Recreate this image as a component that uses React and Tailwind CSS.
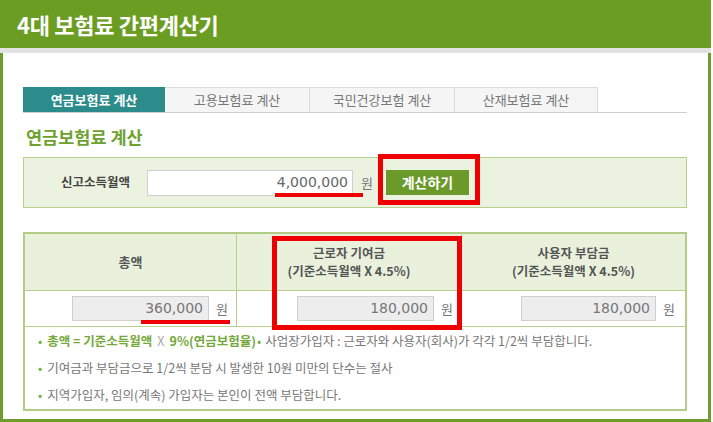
import React from "react";

const kr = { fontFamily: '"Noto Sans CJK KR", "Noto Sans", sans-serif' };
const num = { fontFamily: '"DejaVu Sans", "Liberation Sans", sans-serif' };

const tabs = [
  { label: "연금보험료 계산", w: "w-[142px]", active: true },
  { label: "고용보험료 계산", w: "w-[145px]" },
  { label: "국민건강보험 계산", w: "w-[145px]" },
  { label: "산재보험료 계산", w: "w-[143px]" },
];

const AmountField = ({ value, inputW }) => (
  <div className="flex items-center justify-end gap-[7px] pr-[8px]">
    <div
      className={`${inputW} h-[25px] bg-[#ededed] border border-[#cfcfcf] flex items-center justify-end pr-[5px] text-[14px] text-[#777]`}
      style={num}
    >
      {value}
    </div>
    <span className="text-[13px] text-[#777]">원</span>
  </div>
);

const App = () => {
  return (
    <div className="w-[713px] h-[422px] bg-white relative overflow-hidden" style={kr}>
      <div className="w-[711px] h-[422px] flex flex-col">
        <div className="h-[48px] bg-[#6b9d22] flex items-center pl-[17px]">
          <h1 className="text-[22px] font-bold text-white tracking-[-0.3px]">4대 보험료 간편계산기</h1>
        </div>
        <div className="h-[5px] bg-[#e2e2e2]" />
        <div className="flex-1 border-x-[3px] border-b-[3px] border-[#6e9d2b] pl-[20px] pt-[34px]">
          {/* tabs */}
          <div className="w-[664px] flex border-b border-[#cfcfcf]">
            {tabs.map((t) => (
              <div
                key={t.label}
                className={`${t.w} h-[25px] flex items-center justify-center text-[13px] ${
                  t.active
                    ? "bg-[#2b8c8b] text-white font-bold"
                    : "bg-[#f5f5f5] text-[#777] border-t border-r border-[#dcdcdc]"
                }`}
              >
                {t.label}
              </div>
            ))}
          </div>

          <h2 className="mt-[12px] ml-[3px] text-[17.5px] font-bold text-[#6ea22f] leading-[24px]">연금보험료 계산</h2>

          {/* income input */}
          <div className="mt-[8px] w-[664px] h-[51px] bg-[#ebf2e0] border border-[#b7d08c] flex items-center">
            <span className="ml-[37px] w-[86px] text-[12.5px] font-bold text-[#444]">신고소득월액</span>
            <div
              className="w-[206px] h-[26px] bg-white border border-[#cfcfcf] flex items-center justify-end pr-[4px] text-[14px] text-[#666]"
              style={num}
            >
              4,000,000
            </div>
            <span className="ml-[8px] text-[13px] text-[#777]">원</span>
            <button className="ml-[13px] w-[83px] h-[25px] bg-[#6b9a2a] text-white text-[14px] font-bold">
              계산하기
            </button>
          </div>

          {/* result table */}
          <div className="mt-[24px] w-[664px] h-[179px] border-2 border-[#b3cc86] flex flex-col">
            <div className="h-[58px] flex bg-[#e9f1dc] border-b border-[#b7d08c]">
              <div className="w-[212px] flex items-center justify-center text-[13px] font-bold text-[#555] border-r border-[#b7d08c]">
                총액
              </div>
              <div className="w-[225px] flex flex-col items-center justify-center text-[12.5px] font-bold text-[#555] leading-[18px] border-r border-[#b7d08c]">
                <span>근로자 기여금</span>
                <span>(기준소득월액 X 4.5%)</span>
              </div>
              <div className="flex-1 flex flex-col items-center justify-center text-[12.5px] font-bold text-[#555] leading-[18px]">
                <span>사용자 부담금</span>
                <span>(기준소득월액 X 4.5%)</span>
              </div>
            </div>
            <div className="h-[36px] flex border-b border-[#b7d08c]">
              <div className="w-[212px] flex items-center justify-end border-r border-[#b7d08c]">
                <AmountField value="360,000" inputW="w-[137px]" />
              </div>
              <div className="w-[225px] flex items-center justify-end border-r border-[#b7d08c]">
                <AmountField value="180,000" inputW="w-[137px]" />
              </div>
              <div className="flex-1 flex items-center justify-end pr-[2px]">
                <AmountField value="180,000" inputW="w-[135px]" />
              </div>
            </div>
            <div className="flex-1 flex flex-col pl-[13px] pt-[1px] text-[12.5px] text-[#777]">
              <p className="h-[27px] flex items-center">
                <span className="text-[#79ad3c] mr-[5px]">•</span>
                <span className="text-[#74a83a] font-bold">총액 = 기준소득월액</span>
                <span className="text-[#aaa] mx-[5px]">X</span>
                <span className="text-[#74a83a] font-bold">9%(연금보험율)</span>
                <span className="text-[#79ad3c] ml-[1px] mr-[4px]">•</span>
                <span>사업장가입자 : 근로자와 사용자(회사)가 각각 1/2씩 부담합니다.</span>
              </p>
              <p className="h-[27px] flex items-center">
                <span className="text-[#79ad3c] mr-[5px]">•</span>
                <span>기여금과 부담금으로 1/2씩 분담 시 발생한 10원 미만의 단수는 절사</span>
              </p>
              <p className="h-[27px] flex items-center">
                <span className="text-[#79ad3c] mr-[5px]">•</span>
                <span>지역가입자, 임의(계속) 가입자는 본인이 전액 부담합니다.</span>
              </p>
            </div>
          </div>
        </div>
      </div>

      {/* red annotations */}
      <div className="absolute left-[378px] top-[154px] w-[102px] h-[51px] border-[5px] border-[#ee0000]" />
      <div className="absolute left-[275px] top-[193px] w-[88px] h-[4px] bg-[#ee0000]" />
      <div className="absolute left-[272px] top-[236px] w-[190px] h-[94px] border-[5px] border-[#ee0000]" />
      <div className="absolute left-[141px] top-[320px] w-[89px] h-[4px] bg-[#ee0000]" />
    </div>
  );
};

export default App;
